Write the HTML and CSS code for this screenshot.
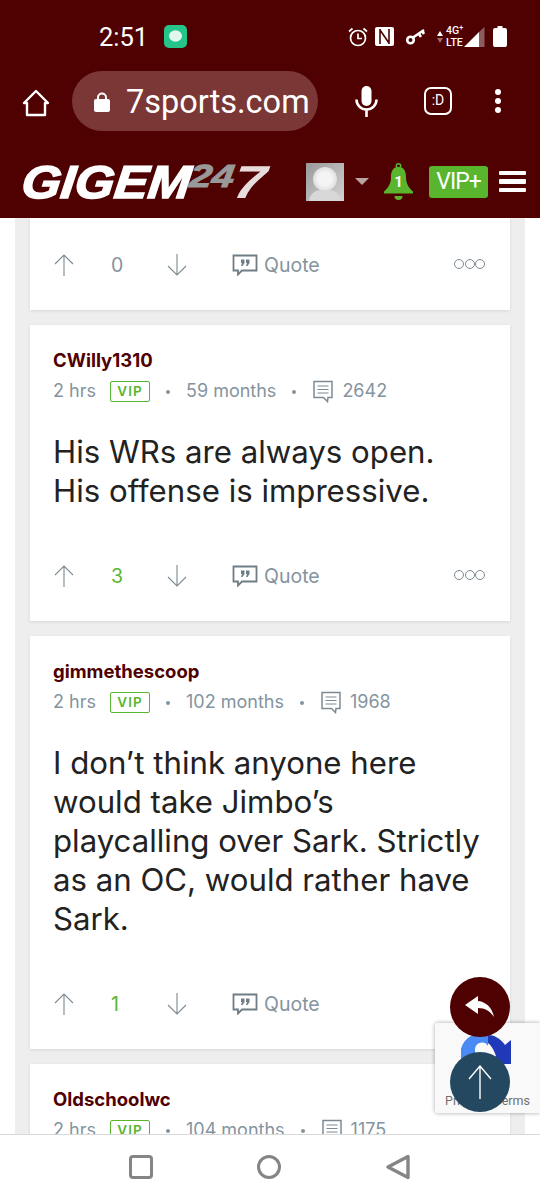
FILE: index.html
```html
<!DOCTYPE html>
<html lang="en">
<head>
	<meta charset="utf-8">
	<meta name="viewport" content="width=device-width, initial-scale=1">
	<title>GigEm247</title>
	<link rel="stylesheet" href="styles.css">
</head>
<body>
<svg class="defs" width="0" height="0">
	<symbol id="up" viewBox="0 0 22 24"><path d="M11 23V2M2 11l9-9 9 9" fill="none" stroke="currentColor" stroke-width="1.1"/></symbol>
	<symbol id="down" viewBox="0 0 22 24"><path d="M11 1v21M2 13l9 9 9-9" fill="none" stroke="currentColor" stroke-width="1.1"/></symbol>
	<symbol id="quote" viewBox="0 0 26 22"><path d="M1.500 1.500h23v15H10l-4 4v-4H1.500z" fill="none" stroke="currentColor" stroke-width="1.800"/><path d="M9 5.500h3.500v3.500l-2 3H9l1-3H9zM14 5.500h3.500v3.500l-2 3H14l1-3h-1z" fill="currentColor"/></symbol>
	<symbol id="posts" viewBox="0 0 22 23"><path d="M2 1.500h18v16h-4l-.5 4-4-4H2z" fill="none" stroke="currentColor" stroke-width="1.500"/><path d="M5.500 6h11M5.500 9.500h11M5.500 13h11" stroke="currentColor" stroke-width="1.200"/></symbol>
</svg>

<div class="page">
	<header class="top">
		<div class="status">
			<span class="time">2:51</span>
			<svg class="msg" width="23" height="23" viewBox="0 0 23 23"><rect width="23" height="23" rx="5" fill="#25c48b"/><ellipse cx="11.500" cy="11" rx="6.500" ry="5.800" fill="#dff7ee"/></svg>
			<span class="status-icons">
				<svg width="20" height="20" viewBox="0 0 20 20"><circle cx="10" cy="11" r="7.500" fill="none" stroke="#fff" stroke-width="1.700"/><path d="M10 6.500V11.500H14M1 4.500L4.500 1.500M19 4.500L15.500 1.500" fill="none" stroke="#fff" stroke-width="1.700"/></svg>
				<svg class="nfc" width="19" height="19" viewBox="0 0 19 19"><rect width="19" height="19" rx="2" fill="#fff"/><path d="M5 2v15M5 3L14 16M14 2v15" fill="none" stroke="#4f0000" stroke-width="1.600"/></svg>
				<svg class="key" width="20" height="17" viewBox="0 0 20 17"><circle cx="4.500" cy="12" r="3.300" fill="none" stroke="#fff" stroke-width="2.600"/><path d="M7 9.500L18 2M13 6l2 3M16.500 3.500l1.500 2.500" fill="none" stroke="#fff" stroke-width="2.600"/></svg>
				<span class="updown"><i class="tri-up"></i><i class="tri-down"></i></span>
				<span class="net">4G<sup>+</sup><br>LTE</span>
				<svg class="signal" width="21" height="20" viewBox="0 0 21 20"><path d="M0 20L15 5v15z" fill="#fff"/><path d="M15 5L20.500 0v20H15z" fill="#8d5d5d"/></svg>
				<svg class="batt" width="14" height="21" viewBox="0 0 14 21"><path d="M4.500 0h5v2H12a2 2 0 0 1 2 2v15a2 2 0 0 1-2 2H2a2 2 0 0 1-2-2V4a2 2 0 0 1 2-2h2.500z" fill="#fff"/></svg>
			</span>
		</div>
		<div class="urlbar">
			<svg class="home" width="28" height="28" viewBox="0 0 28 28"><path d="M2 14L14 2l12 12h-3v12H5V14z" fill="none" stroke="#fff" stroke-width="2.400" stroke-linejoin="round"/></svg>
			<div class="pill">
				<svg width="16" height="20" viewBox="0 0 16 20"><path d="M4 8V5.500a4 4 0 0 1 8 0V8" fill="none" stroke="#fff" stroke-width="2"/><rect y="7" width="16" height="13" rx="2" fill="#fff"/></svg>
				<span class="domain">7sports.com</span>
			</div>
			<svg class="mic" width="23" height="31" viewBox="0 0 23 31"><rect x="6.500" y="0" width="10" height="20" rx="5" fill="#fff"/><path d="M1.500 13.500a10 10 0 0 0 20 0M11.500 23.500V31" fill="none" stroke="#fff" stroke-width="2.600"/></svg>
			<span class="smile">:D</span>
			<span class="dots"><i></i><i></i><i></i></span>
		</div>
		<div class="sitebar">
			<span class="logo"><span class="logo-main">GIGEM</span><em>24</em><b>7</b></span>
			<span class="avatar"><i class="av-head"></i><i class="av-body"></i></span>
			<i class="caret"></i>
			<svg class="bell" width="31" height="38" viewBox="0 0 31 38"><circle cx="15.500" cy="3" r="2.200" fill="none" stroke="#5ab52e" stroke-width="1.500"/><path d="M15.500 4c6 0 7.500 5 7.500 10 0 7 3 11 7 14.500v2H1v-2C5 25 8 21 8 14 8 9 9.500 4 15.500 4z" fill="#5ab52e"/><path d="M11.500 33h8a4 4 0 0 1-8 0z" fill="#5ab52e"/><text x="15.500" y="24" text-anchor="middle" class="bell-num">1</text></svg>
			<span class="vip-plus">VIP+</span>
			<span class="burger"><i></i><i></i><i></i></span>
		</div>
	</header>

	<main class="feed">
		<article class="post post-cut">
			<div class="actions">
				<svg class="arrow" width="22" height="24"><use href="#up"/></svg>
				<span class="count">0</span>
				<svg class="arrow arrow-down" width="22" height="24"><use href="#down"/></svg>
				<svg class="quote-ico" width="26" height="22"><use href="#quote"/></svg>
				<span class="quote">Quote</span>
				<span class="more"><i></i><i></i><i></i></span>
			</div>
		</article>

		<article class="post">
			<div class="name">CWilly1310</div>
			<div class="meta">
				<span>2 hrs</span><span class="vip">VIP</span><i class="dot"></i><span>59 months</span><i class="dot"></i>
				<svg width="22" height="23"><use href="#posts"/></svg><span class="num">2642</span>
			</div>
			<p class="body">His WRs are always open.<br>His offense is impressive.</p>
			<div class="actions">
				<svg class="arrow" width="22" height="24"><use href="#up"/></svg>
				<span class="count green">3</span>
				<svg class="arrow arrow-down" width="22" height="24"><use href="#down"/></svg>
				<svg class="quote-ico" width="26" height="22"><use href="#quote"/></svg>
				<span class="quote">Quote</span>
				<span class="more"><i></i><i></i><i></i></span>
			</div>
		</article>

		<article class="post">
			<div class="name">gimmethescoop</div>
			<div class="meta">
				<span>2 hrs</span><span class="vip">VIP</span><i class="dot"></i><span>102 months</span><i class="dot"></i>
				<svg width="22" height="23"><use href="#posts"/></svg><span class="num">1968</span>
			</div>
			<p class="body">I don’t think anyone here<br>would take Jimbo’s<br>playcalling over Sark. Strictly<br>as an OC, would rather have<br>Sark.</p>
			<div class="actions">
				<svg class="arrow" width="22" height="24"><use href="#up"/></svg>
				<span class="count green">1</span>
				<svg class="arrow arrow-down" width="22" height="24"><use href="#down"/></svg>
				<svg class="quote-ico" width="26" height="22"><use href="#quote"/></svg>
				<span class="quote">Quote</span>
			</div>
		</article>

		<article class="post">
			<div class="name">Oldschoolwc</div>
			<div class="meta">
				<span>2 hrs</span><span class="vip">VIP</span><i class="dot"></i><span>104 months</span><i class="dot"></i>
				<svg width="22" height="23"><use href="#posts"/></svg><span class="num">1175</span>
			</div>
		</article>
	</main>

	<nav class="navbar">
		<span class="nav-square"></span>
		<span class="nav-circle"></span>
		<svg width="26" height="26" viewBox="0 0 26 26"><path d="M23 2.500v21L3 13z" fill="none" stroke="#858585" stroke-width="3.400" stroke-linejoin="round"/></svg>
	</nav>

	<div class="recaptcha">
		<svg width="60" height="50" viewBox="0 0 60 50"><path d="M37 12a20 20 0 0 0-27 14v14h14V26a7 7 0 0 1 13-3z" fill="#4a8af4"/><path d="M37 12c6 0 12 3 17 10l6-5v24H36l9-8c-2-6-5-11-8-13z" fill="#2039b8"/></svg>
		<span class="rc-text">Privacy - Terms</span>
	</div>
	<div class="fab fab-reply">
		<svg width="30" height="22" viewBox="0 0 30 22"><path d="M13 0L0 9l13 9v-6c7 0 12 3 16 9-2-9-7-15-16-16z" fill="#fff"/></svg>
	</div>
	<div class="fab fab-up">
		<svg width="24" height="34" viewBox="0 0 24 34"><path d="M12 34V1M1 14L12 1l11 13" fill="none" stroke="#fff" stroke-width="1.400"/></svg>
	</div>
</div>
</body>
</html>
```

FILE: styles.css
```css
* {
	box-sizing: border-box;
}
html, body {
	margin: 0;
	background: #fff;
}
i {
	display: block;
}
.defs {
	position: absolute;
}
.page {
	position: relative;
	width: 540px;
	height: 1200px;
	overflow: hidden;
	display: flex;
	flex-direction: column;
	font-family: Inter, "Liberation Sans", sans-serif;
}

/* top chrome */
.top {
	height: 218px;
	flex: none;
	background: #4f0000;
	color: #fff;
	font-family: Roboto, sans-serif;
}
.status {
	height: 71px;
	display: flex;
	align-items: center;
	padding: 2px 33px 0 99px;
}
.time {
	font-size: 25.500px;
	line-height: 30px;
	width: 65px;
}
.status-icons {
	margin-left: auto;
	display: flex;
	align-items: center;
}
.nfc { margin-left: 7px; }
.key { margin-left: 12px; }
.updown { margin-left: 11px; display: flex; flex-direction: column; gap: 2px; }
.tri-up, .tri-down {
	border-left: 3.500px solid transparent;
	border-right: 3.500px solid transparent;
}
.tri-up { border-bottom: 5px solid #fff; }
.tri-down { border-top: 5px solid #a06a6a; }
.net {
	font-size: 10.500px;
	line-height: 12px;
	width: 18px;
	margin-left: 3px;
	font-weight: 500;
}
.net sup { font-size: 7px; line-height: 0; }
.signal { margin-left: 0; }
.batt { margin-left: 8px; }

.urlbar {
	height: 60px;
	display: flex;
	align-items: center;
	padding-left: 22px;
}
.home { flex: none; margin-top: 3px; }
.pill {
	margin-left: 22px;
	width: 246px;
	height: 60px;
	border-radius: 30px;
	background: #7b3636;
	display: flex;
	align-items: center;
	padding: 2px 0 0 22px;
	gap: 16px;
}
.domain {
	font-size: 32.500px;
	line-height: 40px;
}
.mic { margin-left: 37px; }
.smile {
	margin-left: 46px;
	width: 28px;
	height: 28px;
	border: 2.500px solid #fff;
	border-radius: 7px;
	font-size: 14px;
	line-height: 23px;
	text-align: center;
}
.dots {
	margin-left: 43px;
	display: flex;
	flex-direction: column;
	gap: 3px;
}
.dots i {
	width: 6px;
	height: 6px;
	border-radius: 50%;
	background: #fff;
}

.sitebar {
	height: 87px;
	display: flex;
	align-items: center;
	padding: 14px 14px 0 22px;
}
.logo {
	flex: none;
	width: 284px;
	height: 36px;
	display: flex;
	align-items: flex-start;
	font-family: "Liberation Sans", sans-serif;
	font-weight: 700;
	font-style: italic;
	color: #fff;
}
.logo-main {
	width: 168px;
	font-size: 46px;
	line-height: 36px;
	-webkit-text-stroke: 1.500px #fff;
	transform: scaleX(1.1) skewX(-6deg);
	transform-origin: left center;
}
.logo em {
	width: 44px;
	font-size: 32px;
	line-height: 24px;
	color: #999;
	-webkit-text-stroke: 1px #999;
	transform: scaleX(1.25) skewX(-6deg);
	transform-origin: left center;
}
.logo b {
	font-size: 46px;
	line-height: 36px;
	color: #e6dcdc;
	transform: scaleX(1.25) skewX(-6deg);
	transform-origin: left center;
}
.avatar {
	position: relative;
	flex: none;
	width: 38px;
	height: 38px;
	background: linear-gradient(135deg, #999, #d4d4d4);
	overflow: hidden;
}
.av-head {
	position: absolute;
	left: 7px;
	top: 4px;
	width: 24px;
	height: 24px;
	border-radius: 50%;
	background: radial-gradient(circle, #f4f4f4 40%, #c9c9c9);
}
.av-body {
	position: absolute;
	left: 3px;
	top: 27px;
	width: 32px;
	height: 20px;
	border-radius: 12px 12px 0 0;
	background: #d8d8d8;
}
.caret {
	margin-left: 11px;
	border-left: 7px solid transparent;
	border-right: 7px solid transparent;
	border-top: 7px solid #b9a3a3;
}
.bell { margin-left: 14px; flex: none; }
.bell-num {
	font-family: Roboto, sans-serif;
	font-weight: 700;
	font-size: 15px;
	fill: #fff;
}
.vip-plus {
	margin-left: 15px;
	width: 60px;
	height: 32px;
	border-radius: 3px;
	background: #5ab52e;
	font-size: 23px;
	letter-spacing: -1px;
	line-height: 32px;
	text-align: center;
}
.burger {
	margin-left: 11px;
	display: flex;
	flex-direction: column;
	gap: 4px;
}
.burger i {
	width: 27px;
	height: 4.500px;
	border-radius: 1px;
	background: #fff;
}

/* posts */
.feed {
	flex: 1;
	min-height: 0;
	overflow: hidden;
	margin: 0 15px;
	padding: 0 15px;
	background: #eee;
	display: flex;
	flex-direction: column;
	gap: 15px;
}
.post {
	flex: none;
	background: #fff;
	padding: 24px 23px 30px;
	box-shadow: 0 1px 3px rgba(0, 0, 0, 0.1);
}
.post-cut {
	padding-top: 32px;
}
.name {
	color: #4f0000;
	font-weight: 700;
	font-size: 18.500px;
	line-height: 22px;
}
.meta {
	margin-top: 8px;
	height: 24px;
	display: flex;
	align-items: center;
	color: #84949e;
	font-size: 18px;
	line-height: 24px;
}
.meta svg {
	flex: none;
	color: #7d8a92;
}
.vip {
	margin-left: 14px;
	width: 40px;
	height: 21px;
	border: 1.500px solid #5ab52e;
	border-radius: 2px;
	color: #5ab52e;
	font-size: 13.500px;
	font-weight: 600;
	letter-spacing: 1px;
	line-height: 18px;
	text-align: center;
}
.dot {
	width: 4px;
	height: 4px;
	margin: 2px 16px 0;
	border-radius: 50%;
	background: #84949e;
}
.num {
	margin-left: 8px;
}
.body {
	margin: 30px 0 0;
	color: #222;
	font-size: 31.200px;
	line-height: 39px;
}
.actions {
	margin-top: 50px;
	height: 30px;
	display: flex;
	align-items: center;
	color: #84949e;
	font-size: 19.500px;
}
.post-cut .actions {
	margin-top: 0;
}
.arrow {
	flex: none;
	color: #7d8a92;
}
.count {
	width: 36px;
	margin-left: 36px;
	margin-right: 19px;
}
.green {
	color: #5ab52e;
}
.quote-ico {
	flex: none;
	margin-left: 44px;
	color: #6f7d85;
}
.quote {
	margin-left: 6px;
}
.more {
	margin-left: auto;
	margin-right: 2px;
	margin-bottom: 2px;
	display: flex;
	gap: 0.500px;
}
.more i {
	width: 10px;
	height: 10px;
	border: 1.500px solid #7d8a92;
	border-radius: 50%;
}

/* bottom bar */
.navbar {
	flex: none;
	height: 66px;
	background: #fff;
	border-top: 1px solid #d8d8d8;
	position: relative;
	display: grid;
	grid-template-columns: 26px 26px 26px;
	column-gap: 102px;
	align-items: center;
	justify-content: center;
	padding: 0 0 2px 0;
}
.nav-square {
	width: 24px;
	height: 24px;
	border: 3.400px solid #858585;
	border-radius: 4px;
}
.nav-circle {
	width: 24px;
	height: 24px;
	border: 3.400px solid #858585;
	border-radius: 50%;
}

/* floating things */
.recaptcha {
	position: absolute;
	left: 435px;
	top: 1023px;
	width: 105px;
	height: 90px;
	background: #f9f9f9;
	box-shadow: 0 0 4px rgba(0, 0, 0, 0.35);
	border-radius: 2px 0 0 2px;
	padding: 0 0 0 16px;
}
.rc-text {
	position: absolute;
	left: 10px;
	top: 70px;
	font-family: Roboto, sans-serif;
	font-size: 12.500px;
	line-height: 16px;
	white-space: nowrap;
	color: #6f6f6f;
}
.fab {
	position: absolute;
	left: 450px;
	width: 60px;
	height: 60px;
	border-radius: 50%;
	display: flex;
	align-items: center;
	justify-content: center;
}
.fab-reply {
	top: 977px;
	background: #4f0000;
}
.fab-up {
	top: 1052px;
	background: #24485f;
}
```
